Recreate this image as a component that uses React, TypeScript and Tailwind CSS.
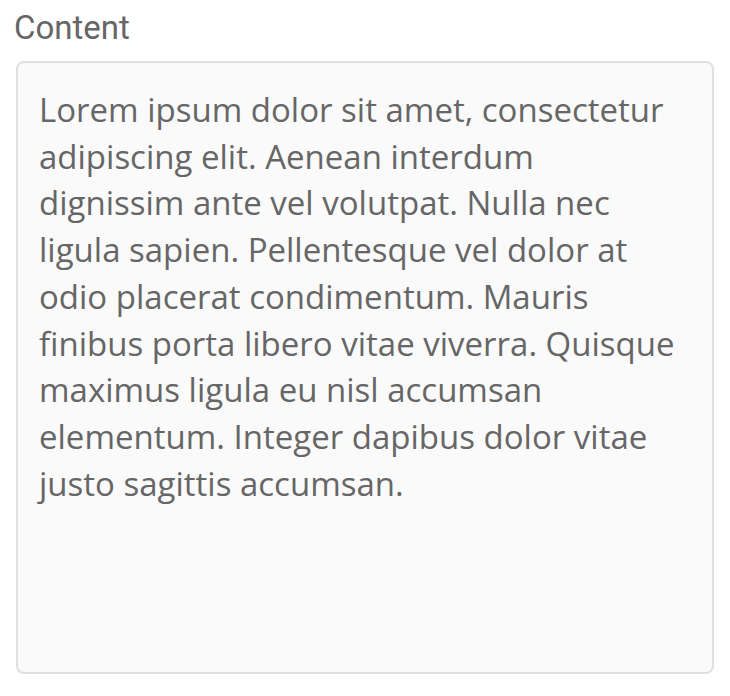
const TEXT =
  "Lorem ipsum dolor sit amet, consectetur adipiscing elit. Aenean interdum dignissim ante vel volutpat. Nulla nec ligula sapien. Pellentesque vel dolor at odio placerat condimentum. Mauris finibus porta libero vitae viverra. Quisque maximus ligula eu nisl accumsan elementum. Integer dapibus dolor vitae justo sagittis accumsan.";

export default function App() {
  return (
    <div className="w-[730px] h-[696px] bg-white px-[16px] pt-[8px]">
      <label
        htmlFor="content"
        className="block -ml-[2px] mb-[13px] text-[33px] leading-[40px] text-[#666] font-['Roboto',sans-serif]"
      >
        Content
      </label>
      <textarea
        id="content"
        readOnly
        defaultValue={TEXT}
        className="block w-[698px] h-[613px] resize-none rounded-[8px] border-2 border-[#e0e0e0] bg-[#fafafa] pl-[21px] pr-[31px] pt-[24px] pb-[22px] text-[33px] leading-[46.7px] text-[#666] font-['Open_Sans',sans-serif] outline-none"
      />
    </div>
  );
}
